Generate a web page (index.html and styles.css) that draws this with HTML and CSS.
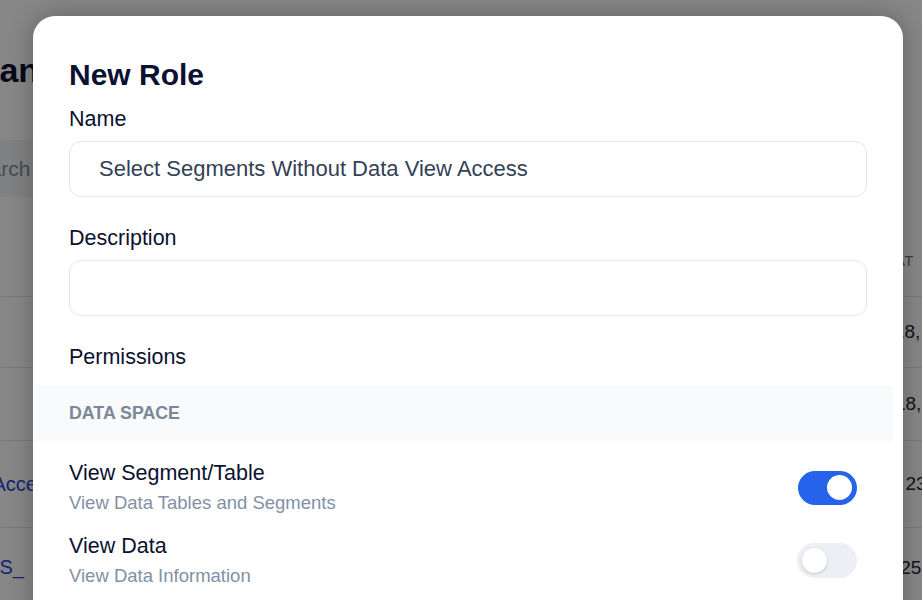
FILE: index.html
```html
<!DOCTYPE html>
<html lang="en">
<head>
<meta charset="utf-8">
<title>New Role</title>
<link rel="stylesheet" href="styles.css">
</head>
<body>
<div class="page">
  <h1 class="page-title">Role Management</h1>
  <div class="search">Search roles</div>
  <div class="table">
    <div class="row row-head"><div class="cell"></div><div class="cell head">UPDATED AT</div></div>
    <div class="row row-a"><div class="cell link">User</div><div class="cell">Apr 18, 2024</div></div>
    <div class="row row-b"><div class="cell link">Staff</div><div class="cell">Jan 18, 2024</div></div>
    <div class="row row-c"><div class="cell link">View Access</div><div class="cell">June 23, 2024</div></div>
    <div class="row row-d"><div class="cell link">ROLES_</div><div class="cell">May 25, 2024</div></div>
  </div>
  <div class="overlay"></div>
  <div class="modal">
    <h2 class="modal-title">New Role</h2>
    <div class="field">
      <div class="field-label">Name</div>
      <div class="input">Select Segments Without Data View Access</div>
    </div>
    <div class="field">
      <div class="field-label">Description</div>
      <div class="input"></div>
    </div>
    <div class="field">
      <div class="field-label">Permissions</div>
    </div>
    <div class="perms">
      <div class="band">Data Space</div>
      <div class="perm-list">
        <div class="perm">
          <div class="perm-text">
            <div class="perm-name">View Segment/Table</div>
            <div class="perm-desc">View Data Tables and Segments</div>
          </div>
          <div class="toggle on"><span class="knob"></span></div>
        </div>
        <div class="perm">
          <div class="perm-text">
            <div class="perm-name">View Data</div>
            <div class="perm-desc">View Data Information</div>
          </div>
          <div class="toggle"><span class="knob"></span></div>
        </div>
      </div>
    </div>
  </div>
</div>
</body>
</html>
```

FILE: styles.css
```css
html, body {
  margin: 0;
  padding: 0;
}
body {
  font-family: "Liberation Sans", Arial, sans-serif;
  background: #ffffff;
  width: 922px;
  height: 600px;
  overflow: hidden;
}
.page {
  position: relative;
  width: 922px;
  height: 600px;
  overflow: hidden;
  padding-top: 50px;
  box-sizing: border-box;
}
.page-title {
  margin: 0 0 0 -112px;
  font-size: 34px;
  line-height: 40px;
  font-weight: 700;
  color: #0b1130;
  white-space: nowrap;
}
.search {
  margin: 50px 0 0 -52px;
  width: 420px;
  height: 57px;
  box-sizing: border-box;
  padding-left: 16px;
  display: flex;
  align-items: center;
  background: #f1f3f6;
  border-radius: 8px;
  font-size: 21px;
  color: #8a8f98;
}
.table {
  margin: 28px 0 0 -60px;
  width: 1100px;
}
.row {
  display: grid;
  grid-template-columns: 919px 1fr;
  align-items: center;
  border-bottom: 1px solid #e5e7eb;
  box-sizing: border-box;
  font-size: 19px;
  color: #1f2937;
  white-space: nowrap;
}
.row-head { height: 72px; }
.row-a { height: 71px; }
.row-b { height: 73px; }
.row-c { height: 87px; }
.row-d { height: 80px; }
.head {
  margin-left: -38px;
  font-size: 14px;
  letter-spacing: 0.05em;
  color: #6b7280;
}
.link {
  padding-left: 5px;
  color: #2447d6;
  font-size: 20px;
}
.overlay {
  position: absolute;
  inset: 0;
  background: rgba(0, 0, 0, 0.47);
}
.modal {
  position: absolute;
  left: 33px;
  top: 16px;
  width: 870px;
  height: 640px;
  box-sizing: border-box;
  padding: 41px 36px 0;
  background: #ffffff;
  border-radius: 22px;
  box-shadow: 0 0 26px rgba(0, 0, 0, 0.28);
}
.modal-title {
  margin: 0 0 14px;
  font-size: 30px;
  line-height: 36px;
  font-weight: 700;
  color: #0b1130;
}
.field {
  display: flex;
  flex-direction: column;
  gap: 10px;
}
.field + .field {
  margin-top: 29px;
}
.field-label {
  font-size: 21.5px;
  line-height: 24px;
  color: #0b1130;
}
.input {
  height: 56px;
  box-sizing: border-box;
  border: 1px solid #e2e8f0;
  border-radius: 12px;
  padding: 0 29px;
  display: flex;
  align-items: center;
  font-size: 22px;
  color: #334155;
}
.perms {
  margin: 16px -26px 0 -36px;
}
.band {
  height: 56px;
  box-sizing: border-box;
  padding: 0 36px;
  display: flex;
  align-items: center;
  background: #f8fafc;
  font-size: 17.8px;
  font-weight: 700;
  text-transform: uppercase;
  color: #7d8799;
}
.perm-list {
  padding: 20px 36px 0;
  display: flex;
  flex-direction: column;
  gap: 20px;
}
.perm {
  display: flex;
  align-items: center;
  justify-content: space-between;
}
.perm-name {
  font-size: 21.5px;
  line-height: 24px;
  color: #0b1130;
}
.perm-desc {
  margin-top: 7px;
  font-size: 18.5px;
  line-height: 22px;
  color: #8390a5;
}
.toggle {
  width: 60px;
  height: 35px;
  box-sizing: border-box;
  border-radius: 18px;
  padding: 0 5px;
  display: flex;
  align-items: center;
  justify-content: flex-start;
  background: #eceff3;
}
.toggle.on {
  width: 59px;
  height: 34px;
  justify-content: flex-end;
  background: #2563eb;
}
.knob {
  width: 25px;
  height: 25px;
  border-radius: 50%;
  background: #ffffff;
  box-shadow: 0 1px 3px rgba(0, 0, 0, 0.18);
}
.toggle.on .knob {
  box-shadow: none;
}
```
